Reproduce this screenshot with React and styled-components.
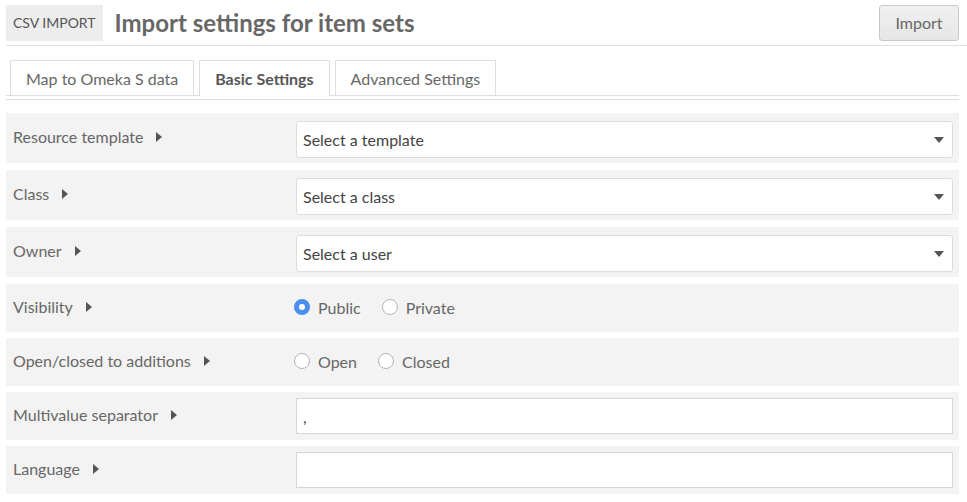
import React from 'react';
import styled, { createGlobalStyle } from 'styled-components';

const GlobalStyle = createGlobalStyle`
    body {
        margin: 0;
        background: #fff;
        font-family: Lato, "Open Sans", sans-serif;
        color: #676767;
    }
`;

const Page = styled.div`
    width: 967px;
`;

const Header = styled.header`
    display: flex;
    align-items: center;
    height: 46px;
    margin-left: 6px;
    padding-right: 8px;
    border-bottom: 1px solid #dfdfdf;
    box-sizing: border-box;
`;

const ModuleTag = styled.div`
    height: 36px;
    padding: 0 7px;
    display: flex;
    align-items: center;
    background: #ededed;
    color: #555;
    font-size: 14px;
    text-transform: uppercase;
`;

const Title = styled.h1`
    margin: 0 0 0 12px;
    font-size: 24px;
    font-weight: 700;
    color: #676767;
    flex: 1;
`;

const Button = styled.button`
    height: 36px;
    width: 80px;
    border: 1px solid #c9c9c9;
    border-radius: 3px;
    background: linear-gradient(#f0f0f0, #e6e6e6);
    font-family: inherit;
    font-size: 16px;
    color: #676767;
`;

const Content = styled.div`
    padding: 0 8px 0 6px;
`;

const TabList = styled.div`
    display: flex;
    gap: 5px;
    margin-top: 14px;
    padding-left: 4px;
    border-bottom: 1px solid #dfdfdf;
`;

const Tab = styled.div`
    padding: 0 15px;
    display: flex;
    align-items: center;
    box-sizing: border-box;
    border: 1px solid #dfdfdf;
    border-bottom: none;
    margin-bottom: ${p => (p.$active ? '-1px' : '0')};
    height: ${p => (p.$active ? '36px' : '35px')};
    background: #fff;
    font-size: 16px;
    font-weight: ${p => (p.$active ? 700 : 400)};
    color: ${p => (p.$active ? '#555' : '#676767')};
`;

const Divider = styled.div`
    margin-top: 3px;
    border-top: 1px solid #dfdfdf;
`;

const Fields = styled.div`
    display: flex;
    flex-direction: column;
    margin-top: 13px;
`;

const Row = styled.div`
    display: flex;
    align-items: center;
    height: ${p => p.$h}px;
    margin-bottom: ${p => p.$gap}px;
    padding: 0 6px 0 7px;
    background: #f3f3f3;
`;

const Meta = styled.div`
    width: 283px;
    flex: none;
    display: flex;
    align-items: center;
    gap: 13px;
    font-size: 16px;
    color: #676767;
    margin-top: -3px;
`;

const Caret = styled.span`
    width: 0;
    height: 0;
    border-top: 5px solid transparent;
    border-bottom: 5px solid transparent;
    border-left: 6px solid #555;
`;

const Value = styled.div`
    flex: 1;
    display: flex;
    align-items: center;
    margin-left: ${p => p.$offset || 0}px;
`;

const Select = styled.div`
    flex: 1;
    height: 37px;
    margin-top: 3px;
    display: flex;
    align-items: center;
    justify-content: space-between;
    padding: 0 8px 0 6px;
    box-sizing: border-box;
    background: #fff;
    border: 1px solid #dcdcdc;
    border-radius: 3px;
    font-size: 16px;
    color: #444;
`;

const DownCaret = styled.span`
    width: 0;
    height: 0;
    border-left: 5px solid transparent;
    border-right: 5px solid transparent;
    border-top: 6px solid #555;
    margin-top: 1px;
`;

const TextInput = styled.div`
    flex: 1;
    height: 36px;
    display: flex;
    align-items: center;
    padding: 0 6px;
    box-sizing: border-box;
    background: #fff;
    border: 1px solid #d6d6d6;
    font-size: 16px;
    color: #444;
`;

const RadioGroup = styled.div`
    display: flex;
    align-items: center;
    gap: 21px;
    margin-top: -2px;
`;

const RadioOption = styled.label`
    display: flex;
    align-items: center;
    gap: 8px;
    font-size: 16px;
    color: #676767;
`;

const RadioDot = styled.span`
    width: 16px;
    height: 16px;
    box-sizing: border-box;
    border-radius: 50%;
    border: ${p => (p.$checked ? '5px solid #4a8ff0' : '1px solid #b5b5b5')};
    background: #fff;
`;

const Label = ({ children }) => (
    <Meta>
        {children}
        <Caret />
    </Meta>
);

const Radios = ({ options, checked }) => (
    <RadioGroup>
        {options.map(o => (
            <RadioOption key={o}>
                <RadioDot $checked={o === checked} />
                {o}
            </RadioOption>
        ))}
    </RadioGroup>
);

const selects = [
    ['Resource template', 'Select a template'],
    ['Class', 'Select a class'],
    ['Owner', 'Select a user'],
];

export default function App() {
    return (
        <Page>
            <GlobalStyle />
            <Header>
                <ModuleTag>CSV Import</ModuleTag>
                <Title>Import settings for item sets</Title>
                <Button>Import</Button>
            </Header>
            <Content>
                <TabList>
                    <Tab>Map to Omeka S data</Tab>
                    <Tab $active>Basic Settings</Tab>
                    <Tab>Advanced Settings</Tab>
                </TabList>
                <Divider />
                <Fields>
                    {selects.map(([label, placeholder]) => (
                        <Row key={label} $h={50} $gap={7}>
                            <Label>{label}</Label>
                            <Value>
                                <Select>
                                    {placeholder}
                                    <DownCaret />
                                </Select>
                            </Value>
                        </Row>
                    ))}
                    <Row $h={48} $gap={6}>
                        <Label>Visibility</Label>
                        <Value $offset={-2}>
                            <Radios options={['Public', 'Private']} checked="Public" />
                        </Value>
                    </Row>
                    <Row $h={48} $gap={6}>
                        <Label>Open/closed to additions</Label>
                        <Value $offset={-2}>
                            <Radios options={['Open', 'Closed']} />
                        </Value>
                    </Row>
                    <Row $h={48} $gap={6}>
                        <Label>Multivalue separator</Label>
                        <Value>
                            <TextInput>,</TextInput>
                        </Value>
                    </Row>
                    <Row $h={48} $gap={6}>
                        <Label>Language</Label>
                        <Value>
                            <TextInput />
                        </Value>
                    </Row>
                </Fields>
            </Content>
        </Page>
    );
}
